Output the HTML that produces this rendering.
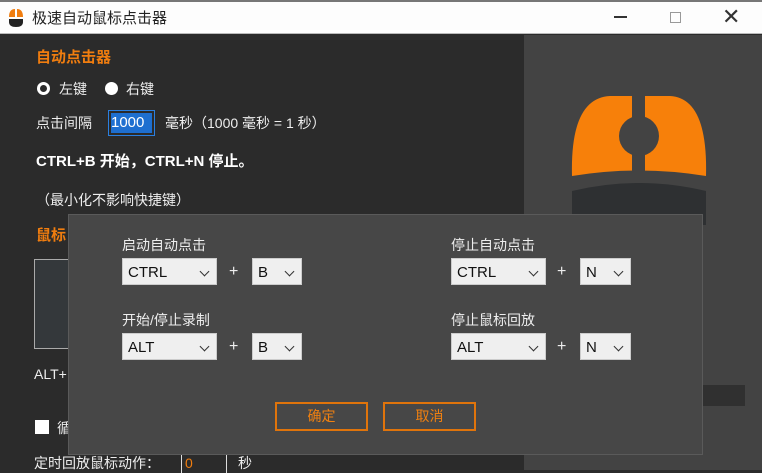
<!DOCTYPE html>
<html><head><meta charset="utf-8"><style>
*{margin:0;padding:0;box-sizing:border-box}
body{width:762px;height:470px;overflow:hidden;background:#2b2b2b;font-family:"Liberation Sans","Noto Sans CJK SC",sans-serif;position:relative;color:#eee}
.a{position:absolute;white-space:nowrap}
.title{left:0;top:0;width:762px;height:34px;background:#fdfdfd;border-top:2px solid #777;border-bottom:1px solid #bbb}
.right{left:524px;top:35px;width:238px;height:435px;background:#434343}
.dlg{left:68px;top:214px;width:635px;height:241px;background:#474747;border:1px solid #5a5a5a}
.sel{position:absolute;background:#efefef;color:#111;font-size:15px;height:27px;line-height:27px;padding-left:5px;border:1px solid #ccc}
.sel:after{content:"";position:absolute;right:8px;top:9px;width:6px;height:6px;border-right:1.3px solid #333;border-bottom:1.3px solid #333;transform:rotate(45deg)}
.lbl{font-size:14px;color:#eee}
.btn{position:absolute;border:2px solid #e0740b;color:#f08010;font-size:14px;text-align:center;line-height:25px;height:29px;width:93px}
.plus{font-size:16px;color:#eee}
</style></head><body>
<div class="a title"></div>
<svg class="a" style="left:8px;top:8px" width="16" height="20" viewBox="0 0 16 20"><path d="M1 9 Q1 1 7 1 V9 Z M9 1 Q15 1 15 9 H9 Z" fill="#f07d0f"/><path d="M1 11 H15 V14 Q15 19 8 19 Q1 19 1 14Z" fill="#222"/></svg>
<div class="a" style="left:32px;top:7px;font-size:15px;color:#222">极速自动鼠标点击器</div>
<div class="a" style="left:614px;top:16px;width:13px;height:1.5px;background:#333"></div>
<div class="a" style="left:670px;top:12px;width:11px;height:11px;border:1px solid #999"></div>
<div class="a" style="left:722px;top:4px;font-size:22px;color:#333;font-weight:300">✕</div>
<div class="a right"></div>
<svg class="a" style="left:570px;top:95px" width="140" height="130" viewBox="0 0 140 130"><path d="M2 81 Q0 3 40 1 H100 Q138 3 136 81 Q69 70 2 81Z" fill="#f7800a"/><rect x="62" y="0" width="13" height="80" fill="#434343"/><circle cx="69" cy="41" r="20" fill="#434343"/><path d="M2 96 Q69 80 136 96 V130 H2Z" fill="#2e3032"/></svg>
<div class="a" style="left:703px;top:385px;width:42px;height:21px;background:#303030"></div>
<div class="a" style="left:36px;top:46px;font-size:15px;font-weight:bold;color:#f07d0f">自动点击器</div>
<div class="a" style="left:37px;top:82px;width:13px;height:13px;border:3px solid #fff;border-radius:50%"></div>
<div class="a lbl" style="left:59px;top:79px">左键</div>
<div class="a" style="left:105px;top:82px;width:13px;height:13px;background:#fff;border-radius:50%"></div>
<div class="a lbl" style="left:126px;top:79px">右键</div>
<div class="a lbl" style="left:36px;top:113px">点击间隔</div>
<div class="a" style="left:108px;top:110px;width:47px;height:26px;border:1px solid #2a7fe0;padding:2px"><div style="background:#1e6fd0;color:#fff;font-size:15px;line-height:20px;height:20px">1000</div></div>
<div class="a lbl" style="left:165px;top:113px">毫秒（1000 毫秒 = 1 秒）</div>
<div class="a" style="left:36px;top:150px;font-size:15px;font-weight:bold;color:#fff">CTRL+B 开始，CTRL+N 停止。</div>
<div class="a lbl" style="left:36px;top:190px">（最小化不影响快捷键）</div>
<div class="a" style="left:36px;top:224px;font-size:15px;font-weight:bold;color:#f07d0f">鼠标</div>
<div class="a" style="left:34px;top:259px;width:40px;height:90px;border:1px solid #aaa;background:#34383b"></div>
<div class="a lbl" style="left:34px;top:366px">ALT+</div>
<div class="a" style="left:35px;top:420px;width:14px;height:14px;background:#fff"></div>
<div class="a lbl" style="left:57px;top:418px">循</div>
<div class="a lbl" style="left:34px;top:453px">定时回放鼠标动作：</div>
<div class="a" style="left:181px;top:455px;width:46px;height:18px;border-left:1px solid #ddd;border-right:1px solid #ddd;color:#f07d0f;font-size:14px;padding-left:3px">0</div>
<div class="a lbl" style="left:238px;top:453px">秒</div>
<div class="a dlg"></div>
<div class="a lbl" style="left:122px;top:235px">启动自动点击</div>
<div class="sel" style="left:122px;top:258px;width:95px">CTRL</div>
<div class="a plus" style="left:229px;top:263px">+</div>
<div class="sel" style="left:252px;top:258px;width:50px">B</div>
<div class="a lbl" style="left:451px;top:235px">停止自动点击</div>
<div class="sel" style="left:451px;top:258px;width:95px">CTRL</div>
<div class="a plus" style="left:557px;top:263px">+</div>
<div class="sel" style="left:580px;top:258px;width:51px">N</div>
<div class="a lbl" style="left:122px;top:310px">开始/停止录制</div>
<div class="sel" style="left:122px;top:333px;width:95px">ALT</div>
<div class="a plus" style="left:229px;top:338px">+</div>
<div class="sel" style="left:252px;top:333px;width:50px">B</div>
<div class="a lbl" style="left:451px;top:310px">停止鼠标回放</div>
<div class="sel" style="left:451px;top:333px;width:95px">ALT</div>
<div class="a plus" style="left:557px;top:338px">+</div>
<div class="sel" style="left:580px;top:333px;width:51px">N</div>
<div class="btn" style="left:275px;top:402px">确定</div>
<div class="btn" style="left:383px;top:402px">取消</div>
</body></html>
